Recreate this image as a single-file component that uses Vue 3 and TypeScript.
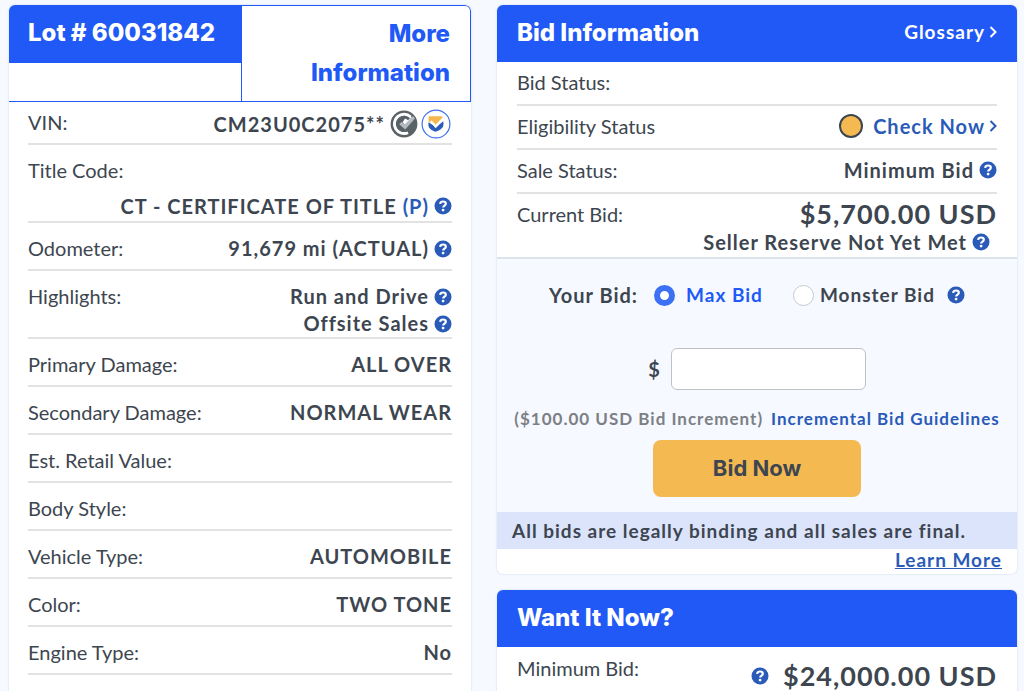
<script setup lang="ts">
import { ref, h } from 'vue'
import type { FunctionalComponent } from 'vue'

interface Detail {
  label: string
  values: string[]
  code?: string
  help?: boolean
  kind?: string
}

const details: Detail[] = [
  { label: 'VIN:', values: ['CM23U0C2075**'], kind: 'vin' },
  { label: 'Title Code:', values: ['CT - CERTIFICATE OF TITLE'], code: '(P)', help: true, kind: 'stacked' },
  { label: 'Odometer:', values: ['91,679 mi (ACTUAL)'], help: true, kind: 'multi' },
  { label: 'Highlights:', values: ['Run and Drive', 'Offsite Sales'], help: true, kind: 'multi' },
  { label: 'Primary Damage:', values: ['ALL OVER'] },
  { label: 'Secondary Damage:', values: ['NORMAL WEAR'] },
  { label: 'Est. Retail Value:', values: [] },
  { label: 'Body Style:', values: [] },
  { label: 'Vehicle Type:', values: ['AUTOMOBILE'] },
  { label: 'Color:', values: ['TWO TONE'] },
  { label: 'Engine Type:', values: ['No'] },
]

const bidType = ref<'max' | 'monster'>('max')
const amount = ref('')

const HelpIcon: FunctionalComponent = () =>
  h('button', { type: 'button', class: 'help', 'aria-label': 'Help' }, [
    h('svg', { viewBox: '0 0 18 18', width: 18, height: 18, 'aria-hidden': 'true' }, [
      h('circle', { cx: 9, cy: 9, r: 8.5, fill: '#2a5bb8' }),
      h('path', {
        d: 'M6.1 6.9C6.4 5.2 7.5 4.5 9 4.5c1.7 0 2.8 0.9 2.8 2.2 0 1.9-2.6 1.9-2.6 3.8',
        fill: 'none',
        stroke: '#fff',
        'stroke-width': 2.2,
      }),
      h('circle', { cx: 9.1, cy: 13.1, r: 1.4, fill: '#fff' }),
    ]),
  ])
</script>

<template>
  <main class="page">
    <section class="card lot">
      <header class="tabs">
        <div class="tab-lot"><h2 class="heading bar">Lot # 60031842</h2></div>
        <div class="tab-more"><a href="#" class="heading">More Information</a></div>
      </header>
      <dl class="details">
        <div v-for="d in details" :key="d.label" class="row" :class="d.kind">
          <dt>{{ d.label }}</dt>
          <dd>
            <div v-for="v in d.values" :key="v" class="value">
              <span>{{ v }} <a v-if="d.code" href="#">{{ d.code }}</a></span>
              <HelpIcon v-if="d.help" />
              <span v-if="d.kind === 'vin'" class="badges">
                <svg viewBox="0 0 28 28" width="28" height="28" role="img" aria-label="Verified VIN">
                  <circle cx="14" cy="14" r="13.4" fill="#596266" />
                  <path d="M20.5 6.8A9.6 9.6 0 1 0 18 22.6" fill="none" stroke="#fff" stroke-width="3" />
                  <path d="M17 5.2 22 7l-6.5 8-3-2.6z" fill="#fff" />
                  <path d="M19 9.2A6.6 6.6 0 1 0 17.5 19.6" fill="none" stroke="#596266" stroke-width="3" />
                  <path d="m9.2 14.2 2.3-2.2 3.2 2.6L23 6l2 2.6-9.8 10.8z" fill="#b4bbc0" />
                </svg>
                <svg viewBox="0 0 30 30" width="30" height="30" role="img" aria-label="Vehicle report">
                  <circle cx="15" cy="15" r="13.9" fill="#fff" stroke="#3f70ed" stroke-width="1.2" />
                  <path d="M7.6 7.2h13.6v2.4l-6.7 7-6.9-4.2z" fill="#f5b64e" />
                  <path d="M7.4 13.2l7.2 4.6 7.8-5.6v3.6c0 3.4-3.4 5.2-7.7 7-4.1-1.6-7.3-3.6-7.3-6.9z" fill="#2a5bb8" />
                  <path d="m9 12.6 1.6-1.2 4 4 7-6.8 1 2.6-8 8z" fill="#fff" />
                </svg>
              </span>
            </div>
          </dd>
        </div>
      </dl>
    </section>

    <div class="side">
      <section class="card">
        <header class="bar bid-bar">
          <h2 class="heading">Bid Information</h2>
          <a href="#" class="glossary">Glossary
            <svg viewBox="0 0 8 12" width="8" height="12" aria-hidden="true"><path d="m1.5 1 5 5-5 5" /></svg>
          </a>
        </header>
        <dl class="bid-rows">
          <div class="row"><dt>Bid Status:</dt><dd></dd></div>
          <div class="row">
            <dt>Eligibility Status</dt>
            <dd>
              <a href="#" class="check"><i class="dot"></i>Check Now
                <svg viewBox="0 0 8 12" width="8" height="12" aria-hidden="true"><path d="m1.5 1 5 5-5 5" /></svg>
              </a>
            </dd>
          </div>
          <div class="row"><dt>Sale Status:</dt><dd><div class="value">Minimum Bid <HelpIcon /></div></dd></div>
          <div class="row current">
            <dt>Current Bid:</dt>
            <dd>
              <div class="price">$5,700.00 USD</div>
              <div class="value reserve">Seller Reserve Not Yet Met <HelpIcon /></div>
            </dd>
          </div>
        </dl>
        <form class="bid-form" @submit.prevent>
          <div class="choices" role="radiogroup" aria-labelledby="your-bid">
            <span id="your-bid">Your Bid:</span>
            <label class="choice max"><input v-model="bidType" type="radio" name="bid" value="max" />Max Bid</label>
            <label class="choice"><input v-model="bidType" type="radio" name="bid" value="monster" />Monster Bid</label>
            <HelpIcon />
          </div>
          <div class="amount">
            <label for="bid-amount">$</label>
            <input id="bid-amount" v-model="amount" type="text" />
          </div>
          <p class="increment">
            <span>($100.00 USD Bid Increment)</span>
            <a href="#">Incremental Bid Guidelines</a>
          </p>
          <button type="submit" class="heading bid-now">Bid Now</button>
        </form>
        <p class="notice">All bids are legally binding and all sales are final.</p>
        <p class="learn"><a href="#">Learn More</a></p>
      </section>

      <section class="card">
        <header class="bar bid-bar"><h2 class="heading">Want It Now?</h2></header>
        <dl class="bid-rows">
          <div class="row minimum">
            <dt>Minimum Bid:</dt>
            <dd><div class="value"><HelpIcon /><span class="price">$24,000.00 USD</span></div></dd>
          </div>
        </dl>
      </section>
    </div>
  </main>
</template>

<style>
html, body { background: #f6f9ff; }
body { margin: 0; overflow: hidden; }
</style>

<style scoped>
* { box-sizing: border-box; }
.page {
  display: grid;
  grid-template-columns: 462fr 520fr;
  gap: 26px;
  align-items: start;
  padding: 5px 7px 0 9px;
  color: #3d4650;
  font-family: Lato, "Liberation Sans", sans-serif;
  font-size: 20px;
  line-height: 28px;
}
h2, p, dl, dd { margin: 0; }
a { color: #2a5bb8; text-decoration: none; }
.card {
  overflow: hidden;
  background: #fff;
  border-radius: 6px;
  box-shadow: 0 0 2px #c3d0e2;
}
.lot { min-height: 100vh; }
.heading {
  font-family: Inter, "Liberation Sans", sans-serif;
  font-size: 24px;
  font-weight: 800;
  line-height: 39px;
}
.bar { background: #2059f6; color: #fff; }
.tabs { display: grid; grid-template-columns: 233fr 229fr; height: 97px; }
.tab-lot { border: solid #2059f6; border-width: 0 1px 1px 0; }
.tab-lot .bar { height: 58px; padding: 8px 19px; }
.tab-more {
  padding: 8px 20px 0 60px;
  border: 1px solid #2059f6;
  border-left: 0;
  border-radius: 0 6px 0 0;
  text-align: right;
}
.tab-more a { display: block; color: #2059f6; }
.details { padding: 0 19px; }
.row {
  display: flex;
  justify-content: space-between;
  min-height: 48px;
  padding: 11px 0 5px;
  border-bottom: 2px solid #e2e2e2;
}
dd { font-weight: 700; letter-spacing: 1px; }
.value { display: flex; align-items: center; justify-content: flex-end; gap: 5px; white-space: nowrap; }
.help { display: flex; flex: none; padding: 0; border: 0; background: none; }
.vin { min-height: 42px; padding: 6px 0 4px; }
.vin dd { padding-top: 1px; }
.vin .value { margin-right: 1px; line-height: 29px; }
.badges { display: flex; align-items: center; gap: 3px; }
.stacked { display: block; padding: 11px 0 1px; }
.stacked dd { padding-top: 8px; }
.multi { padding: 11px 0 0; }
.multi dd { padding-top: 1px; }
.multi .value { line-height: 27px; }
.side { display: grid; gap: 16px; }
.bid-bar { display: flex; align-items: center; justify-content: space-between; height: 57px; padding: 0 20px 3px; }
.glossary, .check { display: flex; align-items: center; gap: 4px; font-weight: 700; letter-spacing: 1px; }
.glossary { color: #fff; font-size: 19px; }
.glossary svg, .check svg { fill: none; stroke: currentColor; stroke-width: 2; }
.bid-rows { padding: 0 20px; }
.bid-rows .row { min-height: 44px; padding: 6px 0; }
.bid-rows .current { min-height: 63px; border: 0; padding-bottom: 0; }
.dot { width: 24px; height: 24px; margin-right: 6px; border: 2px solid #3d4650; border-radius: 50%; background: #f5b952; }
.price { font-size: 27px; font-weight: 700; letter-spacing: 1px; text-align: right; }
.reserve { padding-right: 7px; }
.bid-form {
  display: flex;
  flex-direction: column;
  align-items: center;
  padding: 21px 0 15px;
  border-top: 2px solid #dde3ea;
  background: #f6f9ff;
  font-weight: 700;
  letter-spacing: 1px;
}
.choices { display: flex; align-items: center; gap: 12px; height: 30px; }
#your-bid { margin-right: 4px; }
.choice { display: flex; align-items: center; gap: 6px; font-size: 19px; }
.choice.max { gap: 11px; margin-right: 18px; color: #2059f6; }
.choice input {
  appearance: none;
  width: 21px;
  height: 21px;
  margin: 0;
  border: 1px solid #c7c9cd;
  border-radius: 50%;
  background: #fff;
}
.choice input:checked { border: 6px solid #3c71f5; }
.amount { display: flex; align-items: center; gap: 10px; margin-top: 38px; }
.amount input {
  width: 195px;
  height: 42px;
  padding: 0 10px;
  border: 1px solid #bfc1c4;
  border-radius: 6px;
  background: #fff;
  font: inherit;
}
.increment { display: flex; gap: 8px; margin: 15px 0 7px; font-size: 17px; white-space: nowrap; }
.increment span { color: #7c8085; }
.bid-now {
  width: 208px;
  height: 57px;
  border: 0;
  border-radius: 8px;
  background: #f5b952;
  color: #3d4650;
  font-size: 22px;
  font-weight: 700;
}
.notice { padding: 5px 15px 4px; background: #dce4fb; font-size: 19px; font-weight: 700; letter-spacing: 1px; }
.learn { padding: 0 15px 3px; font-size: 19px; font-weight: 700; letter-spacing: 1px; line-height: 22px; text-align: right; }
.learn a { text-decoration: underline; }
.bid-rows .minimum { min-height: 50px; padding-top: 7px; }
.minimum .value { gap: 14px; padding-top: 8px; }
</style>
